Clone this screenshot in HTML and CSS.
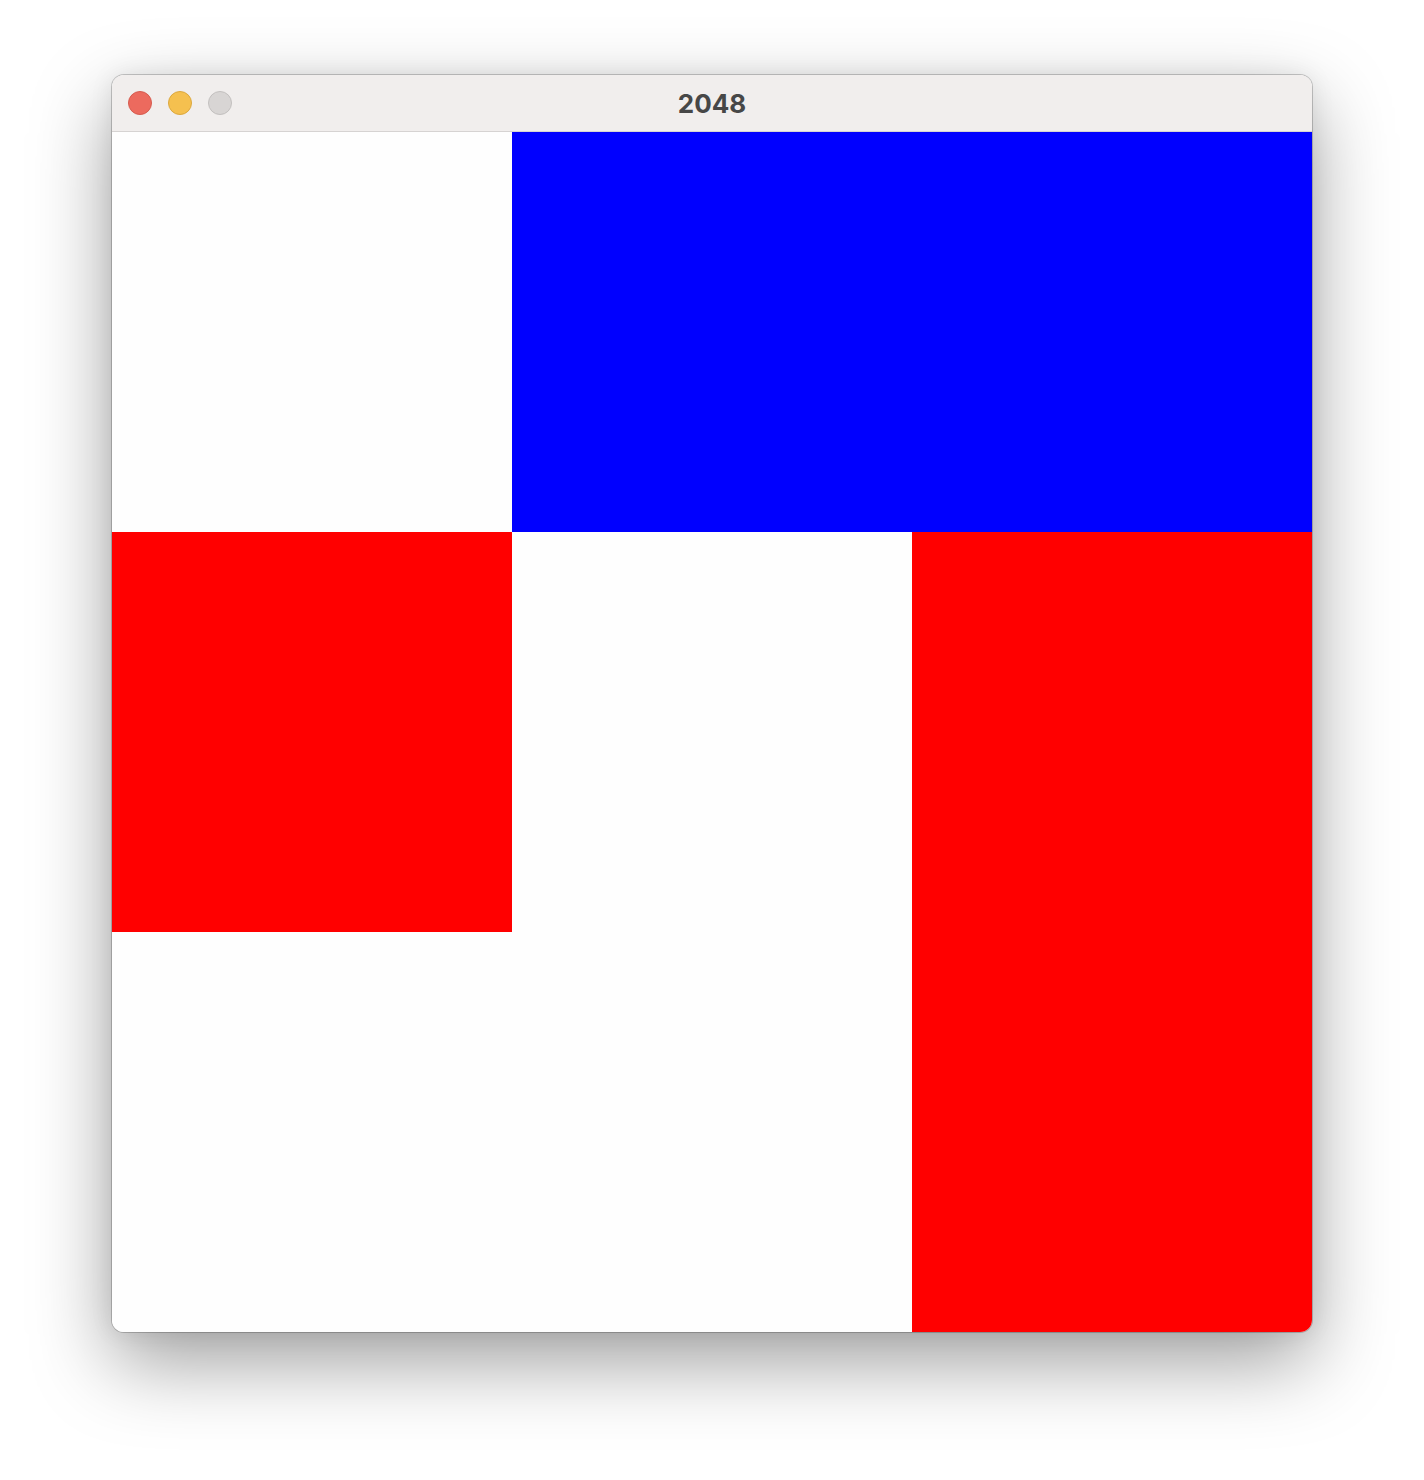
FILE: index.html
```html
<!DOCTYPE html>
<html>
<head>
<meta charset="utf-8">
<title>2048</title>
<link rel="stylesheet" href="styles.css">
</head>
<body>
<div class="window">
  <div class="titlebar">
    <div class="lights">
      <span class="light red"></span>
      <span class="light yellow"></span>
      <span class="light gray"></span>
    </div>
    <div class="title">2048</div>
  </div>
  <div class="board">
    <div class="cell white"></div>
    <div class="cell blue wide"></div>
    <div class="cell red"></div>
    <div class="cell white"></div>
    <div class="cell red tall"></div>
    <div class="cell white"></div>
    <div class="cell white"></div>
  </div>
</div>
</body>
</html>
```

FILE: styles.css
```css
html, body {
  margin: 0;
  padding: 0;
  background: #ffffff;
}
body {
  box-sizing: border-box;
  min-height: 1480px;
  padding: 75px 0 148px 112px;
  font-family: "Inter", "Liberation Sans", sans-serif;
}
.window {
  width: 1200px;
  border-radius: 12px;
  overflow: hidden;
  background: #fefefe;
  box-shadow: 0 0 0 1px rgba(0,0,0,0.2), 0 30px 80px rgba(0,0,0,0.38), 0 0 24px rgba(0,0,0,0.08);
}
.titlebar {
  height: 56px;
  background: #f1eeed;
  border-bottom: 1px solid #d6d3d2;
  display: flex;
  align-items: center;
  position: relative;
}
.lights {
  display: flex;
  gap: 16px;
  padding-left: 16px;
  position: relative;
  z-index: 1;
}
.light {
  width: 24px;
  height: 24px;
  border-radius: 50%;
  box-sizing: border-box;
}
.light.red { background: #ec6a5e; border: 1px solid #d65b4f; }
.light.yellow { background: #f5c04f; border: 1px solid #dca83e; }
.light.gray { background: #d8d5d4; border: 1px solid #c3c0bf; }
.title {
  position: absolute;
  left: 0;
  right: 0;
  text-align: center;
  font-size: 26px;
  font-weight: 700;
  color: #474747;
}
.board {
  display: grid;
  grid-template-columns: repeat(3, 400px);
  grid-template-rows: repeat(3, 400px);
}
.cell.white { background: #fefefe; }
.cell.blue { background: #0000ff; }
.cell.red { background: #ff0000; }
.cell.wide { grid-column: span 2; }
.cell.tall { grid-row: span 2; }
```
